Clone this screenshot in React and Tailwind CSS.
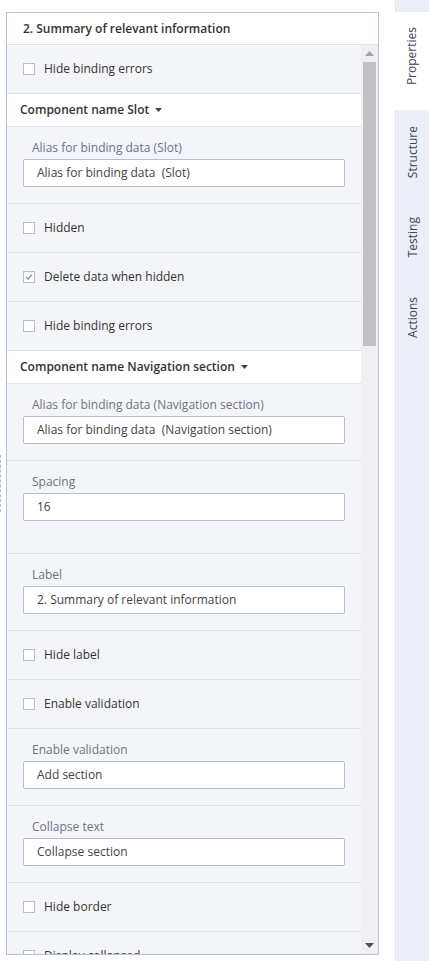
import React from "react";

const font = { fontFamily: '"Open Sans", "Noto Sans", sans-serif' };

function Check({ label, checked }) {
  return (
    <div className="h-[49px] flex items-center pl-[16px] border-b border-[#dde1ec]">
      <div className="w-[12px] h-[12px] border border-[#b3bdd3] bg-white flex items-center justify-center">
        {checked && (
          <svg width="8" height="8" viewBox="0 0 8 8">
            <path d="M1.2 4 L3.2 6.2 L6.8 1.5" fill="none" stroke="#8a91a1" strokeWidth="1.3" />
          </svg>
        )}
      </div>
      <span className="ml-[9px] text-[12px] text-[#333]">{label}</span>
    </div>
  );
}

function Field({ label, value, extra }) {
  return (
    <div className={"pl-[16px] pr-[16px] pt-[12px] border-b border-[#dde1ec] " + (extra ? "pb-[32px]" : "pb-[16px]")}>
      <div className="pl-[9px] h-[18px] leading-[18px] text-[12px] text-[#6c7382]">{label}</div>
      <div className="mt-[2px] h-[28px] border border-[#b3bdd3] rounded-[2px] bg-white flex items-center pl-[13px] text-[12px] text-[#444] whitespace-pre">
        {value}
      </div>
    </div>
  );
}

function Comp({ label }) {
  return (
    <div className="h-[33px] bg-white flex items-center pl-[13px] border-b border-[#dde1ec] text-[12px] font-semibold text-[#333]">
      {label}
      <svg className="ml-[6px]" width="7" height="4" viewBox="0 0 7 4">
        <path d="M0 0 L7 0 L3.5 4 Z" fill="#444" />
      </svg>
    </div>
  );
}

function Tab({ label, active, h, pt }) {
  return (
    <div
      className={"flex justify-center items-start " + (active ? "bg-white -ml-px" : "")}
      style={{ height: h, paddingTop: pt }}
    >
      <span className="[writing-mode:vertical-rl] rotate-180 text-[12px] text-[#3d4454]">{label}</span>
    </div>
  );
}

export default function App() {
  return (
    <div className="relative w-[429px] h-[961px] bg-white flex overflow-hidden" style={font}>
      <div className="absolute left-0 top-[455px] h-[57px] border-l border-dashed border-[#b3bdd3]" />
      <div className="pt-[12px] pl-[6px]">
        <div className="w-[373px] h-[943px] border border-[#b5c2de] flex flex-col">
          <div className="h-[32px] shrink-0 bg-white border-b border-[#dde1ec] flex items-center pl-[16px] text-[12px] font-semibold text-[#333]">
            2. Summary of relevant information
          </div>
          <div className="flex flex-1 min-h-0">
            <div className="w-[354px] bg-[#f4f5f9] overflow-hidden">
              <Check label="Hide binding errors" />
              <Comp label="Component name Slot" />
              <Field label="Alias for binding data (Slot)" value="Alias for binding data  (Slot)" />
              <Check label="Hidden" />
              <Check label="Delete data when hidden" checked />
              <Check label="Hide binding errors" />
              <Comp label="Component name Navigation section" />
              <Field label="Alias for binding data (Navigation section)" value="Alias for binding data  (Navigation section)" />
              <Field label="Spacing" value="16" extra />
              <Field label="Label" value="2. Summary of relevant information" />
              <Check label="Hide label" />
              <Check label="Enable validation" />
              <Field label="Enable validation" value="Add section" />
              <Field label="Collapse text" value="Collapse section" />
              <Check label="Hide border" />
              <Check label="Display collapsed" />
            </div>
            <div className="w-[17px] bg-[#f0f0f0] flex flex-col items-center">
              <div className="h-[17px] flex items-center justify-center">
                <svg width="9" height="5" viewBox="0 0 9 5"><path d="M0 5 L4.5 0 L9 5 Z" fill="#a3a3a3" /></svg>
              </div>
              <div className="w-[13px] h-[284px] bg-[#c1c1c1]" />
              <div className="flex-1" />
              <div className="h-[17px] flex items-center justify-center">
                <svg width="9" height="5" viewBox="0 0 9 5"><path d="M0 0 L9 0 L4.5 5 Z" fill="#505050" /></svg>
              </div>
            </div>
          </div>
        </div>
      </div>
      <div className="ml-[16px] w-[34px] h-full bg-[#eceff8] border-l border-[#dde2ef] flex flex-col pt-[12px]">
        <Tab label="Properties" active h={98} pt={15} />
        <Tab label="Structure" h={90} pt={16} />
        <Tab label="Testing" h={82} pt={17} />
        <Tab label="Actions" h={80} pt={15} />
      </div>
    </div>
  );
}
